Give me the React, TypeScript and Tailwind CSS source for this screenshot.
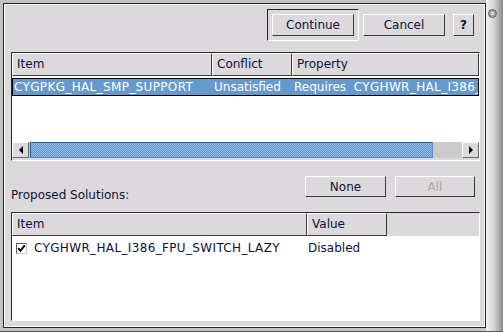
import * as React from "react";

function Head({ className = "", children }: { className?: string; children?: React.ReactNode }) {
  return (
    <div
      className={`h-full border border-t-white border-l-white border-b-[#3a3a3a] border-r-[#3a3a3a] pl-[4px] leading-[21px] whitespace-nowrap overflow-hidden ${className}`}
    >
      {children}
    </div>
  );
}

function Btn({
  className = "",
  disabled,
  children,
}: {
  className?: string;
  disabled?: boolean;
  children: React.ReactNode;
}) {
  return (
    <div
      className={`flex items-center justify-center bg-[#dcd9dc] border border-t-white border-l-white border-b-[#3a3a3a] border-r-[#3a3a3a] ${
        disabled ? "text-[#a8a8a8]" : ""
      } ${className}`}
    >
      {children}
    </div>
  );
}

function ArrowBtn({ dir }: { dir: "left" | "right" }) {
  return (
    <div className="flex w-[17px] h-full items-center justify-center bg-[#dcd9dc] border border-t-white border-l-white border-b-[#6a6a6a] border-r-[#6a6a6a]">
      {dir === "left" ? (
        <div className="w-0 h-0 border-y-[4px] border-y-transparent border-r-[4px] border-r-black" />
      ) : (
        <div className="w-0 h-0 border-y-[4px] border-y-transparent border-l-[4px] border-l-black" />
      )}
    </div>
  );
}

function Scrollbar() {
  return (
    <div className="flex h-[16px] bg-[#cbcbcb]">
      <ArrowBtn dir="left" />
      <div className="w-[1px]" />
      <div className="w-[403px] h-full border border-t-[#2f5f98] border-l-[#2f5f98] border-b-[#5b8cc2] border-r-[#5b8cc2] bg-[image:repeating-conic-gradient(#6497cc_0_25%,#94bbe3_0_50%)] bg-[length:2px_2px]" />
      <div className="flex-1" />
      <ArrowBtn dir="right" />
    </div>
  );
}

function Checkbox() {
  return (
    <div className="flex w-[11px] h-[11px] items-center justify-center bg-white border border-t-[#5a5a5a] border-l-[#5a5a5a] border-b-[#c8c8c8] border-r-[#c8c8c8]">
      <svg width="9" height="9" viewBox="0 0 9 9">
        <path d="M1.2 4.2 L3.4 6.8 L7.8 1.4" fill="none" stroke="#000" strokeWidth="2" />
      </svg>
    </div>
  );
}

export default function App() {
  return (
    <div className="flex w-[503px] h-[332px] overflow-hidden bg-[#c2c2c2] border-b border-b-[#555555] font-['DejaVu_Sans',sans-serif] text-[12px] text-[#10103a]">
      <div className="pl-[3px] pt-[3px]">
        <div className="w-[483px] h-[325px] border border-[#262626]">
          <div className="flex flex-col h-full border border-white bg-[#dcd9dc]">
            {/* action buttons */}
            <div className="flex items-center justify-end mt-[4px] pr-[10px]">
              <div className="flex w-[92px] h-[32px] items-center justify-center border border-t-[#222222] border-l-[#222222] border-b-white border-r-white">
                <Btn className="w-[82px] h-[22px]">Continue</Btn>
              </div>
              <Btn className="w-[82px] h-[22px] ml-[4px]">Cancel</Btn>
              <Btn className="w-[21px] h-[22px] ml-[8px] font-bold">?</Btn>
            </div>

            {/* conflicts list */}
            <div className="flex flex-col mt-[11px] ml-[6px] w-[469px] h-[109px] border border-t-[#2a2a2a] border-l-[#2a2a2a] border-b-white border-r-white">
              <div className="flex h-[23px] bg-[#dcd9dc]">
                <Head className="w-[200px]">Item</Head>
                <Head className="w-[80px]">Conflict</Head>
                <Head className="flex-1">Property</Head>
              </div>
              <div className="flex-1 bg-white pt-[2px]">
                <div className="flex h-[18px] border border-black bg-[#6699cc] text-white leading-[16px] whitespace-nowrap overflow-hidden">
                  <div className="w-[199px] pl-[1px] tracking-[0.35px]">CYGPKG_HAL_SMP_SUPPORT</div>
                  <div className="w-[80px] pl-[2px]">Unsatisfied</div>
                  <div className="flex-1 pl-[2px] overflow-hidden whitespace-pre">
                    Requires{"  "}
                    <span className="tracking-[0.35px]">CYGHWR_HAL_I386_FPU_SWITCH_LAZY</span>
                  </div>
                </div>
              </div>
              <Scrollbar />
              <div className="h-[2px] bg-[#dcd9dc]" />
            </div>

            {/* proposed solutions */}
            <div className="flex items-start mt-[15px] ml-[6px] pr-[9px]">
              <div className="mt-[12px] leading-[14px]">Proposed Solutions:</div>
              <div className="flex-1" />
              <Btn className="w-[81px] h-[21px]">None</Btn>
              <Btn className="w-[80px] h-[21px] ml-[9px]" disabled>
                All
              </Btn>
            </div>

            <div className="flex flex-col mt-[10px] ml-[6px] w-[469px] h-[109px] border border-t-[#2a2a2a] border-l-[#2a2a2a] border-b-white border-r-white">
              <div className="flex h-[23px] bg-[#dcd9dc]">
                <Head className="w-[295px]">Item</Head>
                <Head className="w-[80px]">Value</Head>
              </div>
              <div className="flex-1 bg-white pt-[3px]">
                <div className="flex h-[18px] items-center leading-[18px] whitespace-nowrap">
                  <div className="flex w-[295px] items-center pl-[4px]">
                    <Checkbox />
                    <span className="ml-[7px] tracking-[0.35px]">CYGHWR_HAL_I386_FPU_SWITCH_LAZY</span>
                  </div>
                  <div className="pl-[1px]">Disabled</div>
                </div>
              </div>
            </div>
          </div>
        </div>
      </div>

      {/* window frame edge */}
      <div className="w-[17px] h-full pl-[2px] pt-[9px] bg-linear-to-r from-[#f4f4f4] via-[#d2d2d2] to-[#8a8a8a]">
        <svg width="9" height="9" viewBox="0 0 9 9">
          <circle cx="4.5" cy="4.5" r="4" fill="#9c9c9c" stroke="#6a6a6a" strokeWidth="1" />
          <path d="M3 3 L6 6 M6 3 L3 6" stroke="#e6e6e6" strokeWidth="1.1" />
        </svg>
      </div>
    </div>
  );
}
